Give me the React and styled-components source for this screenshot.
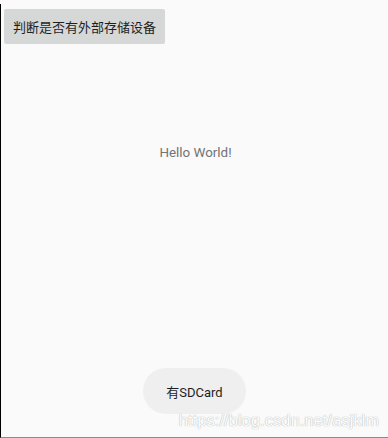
import React from "react";
import styled, { createGlobalStyle } from "styled-components";

const Global = createGlobalStyle`
  html, body { margin: 0; padding: 0; background: #fafafa; }
  body { font-family: Roboto, "Noto Sans CJK SC", sans-serif; }
`;

const Screen = styled.div`
  position: relative;
  margin-top: 4px;
  height: 433px;
  border-left: 1px solid #000;
  border-bottom: 1px solid #8a8a8a;
  display: flex;
  flex-direction: column;
  align-items: flex-start;
  overflow: hidden;
`;

const CheckButton = styled.button`
  margin: 5px 0 0 3px;
  width: 161px;
  height: 35px;
  border: none;
  border-radius: 2px;
  background: #d6d7d7;
  color: #1f1f1f;
  font-family: Roboto, "Noto Sans CJK SC", sans-serif;
  font-size: 13px;
  padding: 0;
  display: flex;
  align-items: center;
  justify-content: center;
`;

const Hello = styled.div`
  align-self: center;
  margin-top: 101px;
  color: #737373;
  font-size: 13.4px;
  line-height: 15px;
  padding-left: 2px;
`;

const Toast = styled.div`
  margin-top: auto;
  margin-bottom: 23px;
  margin-left: 142px;
  width: 103px;
  height: 46px;
  border-radius: 23px;
  background: #efefef;
  color: #1e1e1e;
  font-size: 13px;
  display: flex;
  align-items: center;
  justify-content: center;
`;

const Watermark = styled.div`
  position: absolute;
  right: 9px;
  bottom: 6px;
  font-family: "Liberation Sans", Arial, sans-serif;
  font-size: 16.6px;
  color: #fdfdfd;
  text-shadow: 0 0 1px #b4b4b4, 0 0 1px #c4c4c4;
`;

export default function App() {
  return (
    <>
      <Global />
      <Screen>
        <CheckButton>判断是否有外部存储设备</CheckButton>
        <Hello>Hello World!</Hello>
        <Toast>有SDCard</Toast>
        <Watermark>https://blog.csdn.net/asjklm</Watermark>
      </Screen>
    </>
  );
}
